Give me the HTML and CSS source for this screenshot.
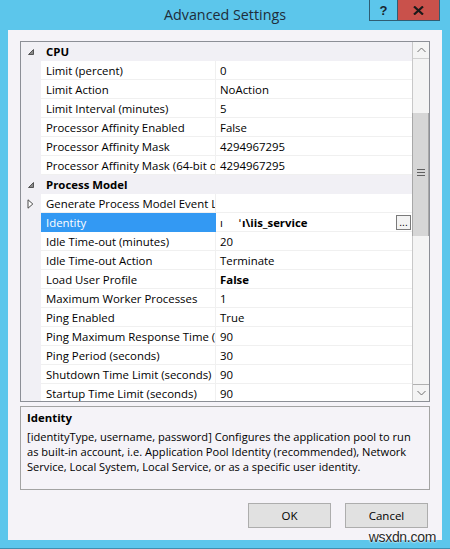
FILE: index.html
```html
<!DOCTYPE html>
<html>
<head>
<meta charset="utf-8">
<link rel="stylesheet" href="styles.css">
</head>
<body>
<div class="window">
  <div class="titlebar">
    <div class="tb-left"></div>
    <div class="title">Advanced Settings</div>
    <div class="caption">
      <div class="cbtn help">?</div>
      <div class="cbtn close"><svg width="11" height="9" viewBox="0 0 11 9"><path d="M1 0.5 L10 8.5 M10 0.5 L1 8.5" stroke="#1a1a1a" stroke-width="2.2" fill="none"/></svg></div>
    </div>
  </div>
  <div class="client">
    <div class="grid">
      <div class="rows">
        <div class="row cat"><span class="gut"><svg class="exp" width="6" height="6" viewBox="0 0 6 6"><polygon points="5.5,0.5 5.5,5.5 0.5,5.5" fill="#8a8a8a" stroke="#3a3a3a" stroke-width="0.8"/></svg></span><span class="name">CPU</span><span class="val"></span></div>
        <div class="row"><span class="gut"></span><span class="name">Limit (percent)</span><span class="val">0</span></div>
        <div class="row"><span class="gut"></span><span class="name">Limit Action</span><span class="val">NoAction</span></div>
        <div class="row"><span class="gut"></span><span class="name">Limit Interval (minutes)</span><span class="val">5</span></div>
        <div class="row"><span class="gut"></span><span class="name">Processor Affinity Enabled</span><span class="val">False</span></div>
        <div class="row"><span class="gut"></span><span class="name">Processor Affinity Mask</span><span class="val">4294967295</span></div>
        <div class="row"><span class="gut"></span><span class="name">Processor Affinity Mask (64-bit option)</span><span class="val">4294967295</span></div>
        <div class="row cat"><span class="gut"><svg class="exp" width="6" height="6" viewBox="0 0 6 6"><polygon points="5.5,0.5 5.5,5.5 0.5,5.5" fill="#8a8a8a" stroke="#3a3a3a" stroke-width="0.8"/></svg></span><span class="name">Process Model</span><span class="val"></span></div>
        <div class="row"><span class="gut"><svg class="col" width="7" height="10" viewBox="0 0 7 10"><polygon points="1,0.8 5.8,5 1,9.2" fill="#ffffff" stroke="#4a4a4a" stroke-width="1"/></svg></span><span class="name">Generate Process Model Event Log Entry</span><span class="val"></span></div>
        <div class="row"><span class="gut"></span><span class="name sel">Identity</span><span class="val ident"><b><span class="r1">ı</span><span class="r2">ˈ</span>ı\iis_service</b><span class="dots">...</span></span></div>
        <div class="row"><span class="gut"></span><span class="name">Idle Time-out (minutes)</span><span class="val">20</span></div>
        <div class="row"><span class="gut"></span><span class="name">Idle Time-out Action</span><span class="val">Terminate</span></div>
        <div class="row"><span class="gut"></span><span class="name">Load User Profile</span><span class="val"><b>False</b></span></div>
        <div class="row"><span class="gut"></span><span class="name">Maximum Worker Processes</span><span class="val">1</span></div>
        <div class="row"><span class="gut"></span><span class="name">Ping Enabled</span><span class="val">True</span></div>
        <div class="row"><span class="gut"></span><span class="name">Ping Maximum Response Time (seconds)</span><span class="val">90</span></div>
        <div class="row"><span class="gut"></span><span class="name">Ping Period (seconds)</span><span class="val">30</span></div>
        <div class="row"><span class="gut"></span><span class="name">Shutdown Time Limit (seconds)</span><span class="val">90</span></div>
        <div class="row"><span class="gut"></span><span class="name">Startup Time Limit (seconds)</span><span class="val">90</span></div>
      </div>
      <div class="vscroll">
        <div class="arrow"><svg width="9" height="6" viewBox="0 0 9 6"><path d="M0.5 5 L4.5 1 L8.5 5" stroke="#707070" stroke-width="1" fill="none"/></svg></div>
        <div class="track"><div class="thumb"><svg width="8" height="7" viewBox="0 0 8 7"><path d="M0 0.5 H8 M0 3.5 H8 M0 6.5 H8" stroke="#606060" stroke-width="1"/></svg></div></div>
        <div class="arrow down"><svg width="9" height="6" viewBox="0 0 9 6"><path d="M0.5 1 L4.5 5 L8.5 1" stroke="#707070" stroke-width="1" fill="none"/></svg></div>
      </div>
    </div>
    <div class="desc">
      <div class="desc-title">Identity</div>
      <div class="desc-text">[identityType, username, password] Configures the application pool to run as built-in account, i.e. Application Pool Identity (recommended), Network Service, Local System, Local Service, or as a specific user identity.</div>
    </div>
    <div class="buttons">
      <button class="btn">OK</button>
      <button class="btn">Cancel</button>
    </div>
  </div>
  <div class="watermark">wsxdn.com</div>
</div>
</body>
</html>
```

FILE: styles.css
```css
* { box-sizing: border-box; }
html, body { margin: 0; padding: 0; }
body {
  width: 450px;
  height: 549px;
  overflow: hidden;
  font-family: "Open Sans", "Noto Sans", sans-serif;
  font-size: 11.4px;
  color: #000;
}
.window {
  position: relative;
  width: 450px;
  height: 549px;
  background: #5cc6eb;
  display: flex;
  flex-direction: column;
  border-bottom: 1px solid #3f8fb0;
}
.titlebar {
  height: 30px;
  flex: 0 0 30px;
  display: grid;
  grid-template-columns: 1fr auto 1fr;
}
.title {
  font-size: 14.3px;
  color: #1e2d3a;
  line-height: 29px;
}
.caption {
  justify-self: end;
  display: flex;
  align-items: flex-start;
  padding-right: 10px;
}
.cbtn {
  height: 21px;
  border: 1px solid #2f5d73;
  border-top: none;
  display: flex;
  align-items: center;
  justify-content: center;
}
.help {
  width: 28px;
  border-right: none;
  background: #5cc6eb;
  font-weight: bold;
  font-size: 13px;
  color: #1a2630;
  font-family: "Liberation Sans", sans-serif;
}
.close {
  width: 43px;
  background: #c9514b;
}
.client {
  flex: 1;
  margin: 0 8px 8px 8px;
  background: #f5f3f8;
  padding: 11px 12px 0 12px;
  display: flex;
  flex-direction: column;
}
.grid {
  height: 361px;
  flex: 0 0 361px;
  border: 1px solid #8c8f96;
  background: #fff;
  display: flex;
}
.rows {
  flex: 1;
  overflow: hidden;
}
.row {
  display: grid;
  grid-template-columns: 20px 175px 1fr;
  height: 19px;
  line-height: 16px;
}
.gut {
  background: #f1f0f5;
  display: flex;
  align-items: center;
  justify-content: center;
}
.exp { margin-left: -1px; margin-top: 1px; }
.col { margin-left: -1px; }
.name {
  padding-left: 5px;
  padding-top: 2px;
  white-space: nowrap;
  overflow: hidden;
  border-bottom: 1px solid #f0f0f0;
  border-right: 1px solid #f0f0f0;
}
.val {
  padding-left: 4px;
  padding-top: 2px;
  white-space: nowrap;
  overflow: hidden;
  border-bottom: 1px solid #f0f0f0;
  display: flex;
  align-items: flex-start;
}
.cat .name, .cat .val {
  background: #f1f0f5;
  border-color: #f1f0f5;
  font-weight: bold;
}
.sel {
  background: #3399f3;
  color: #fff;
  border-color: #3399f3;
}
.ident b { display: flex; }
.r1 { width: 19px; font-weight: normal; }
.r2 { width: 3px; font-weight: normal; }
.ident { padding-top: 0; align-items: center; }
.ident b { padding-top: 2px; }
.dots {
  margin-left: auto;
  margin-right: 1px;
  width: 15px;
  height: 15px;
  border: 1px solid #7a7a7a;
  background: #f3f3f3;
  font-size: 10px;
  line-height: 14px;
  text-align: center;
  font-family: "Liberation Sans", sans-serif;
}
.vscroll {
  width: 17px;
  flex: 0 0 17px;
  background: #f4f4f4;
  border-left: 1px solid #c8c8c8;
  display: flex;
  flex-direction: column;
}
.arrow {
  height: 17px;
  flex: 0 0 17px;
  border-bottom: 1px solid #d0d0d0;
  display: flex;
  align-items: center;
  justify-content: center;
}
.arrow.down {
  border-bottom: none;
  border-top: 1px solid #b0b0b0;
}
.track { flex: 1; }
.thumb {
  margin-top: 54px;
  height: 123px;
  background: #d6d6d6;
  border-left: 1px solid #a8a8a8;
  border-right: 1px solid #a8a8a8;
  display: flex;
  justify-content: center;
  padding-top: 56px;
  margin-left: -1px;
}
.thumb svg { display: block; }
.desc {
  margin-top: 4px;
  height: 84px;
  flex: 0 0 84px;
  border: 1px solid #a3a3a3;
  padding: 3px 5px 0 6px;
  font-size: 11.1px;
  line-height: 15px;
}
.desc-title {
  font-weight: bold;
  font-size: 11.4px;
  margin-bottom: 4px;
}
.buttons {
  display: flex;
  justify-content: flex-end;
  gap: 14px;
  margin-top: 13px;
  padding-right: 2px;
}
.btn {
  width: 83px;
  height: 25px;
  background: #e1e1e1;
  border: 1px solid #adadad;
  font-family: "Open Sans", "Noto Sans", sans-serif;
  font-size: 11.5px;
  color: #000;
  padding: 0;
}
.watermark {
  position: absolute;
  right: 14px;
  bottom: 3px;
  font-family: "Liberation Sans", sans-serif;
  font-size: 14px;
  letter-spacing: -0.3px;
  color: #2a2a2a;
  text-shadow: 0 0 2px #fff, 0 0 2px #fff;
}
```
